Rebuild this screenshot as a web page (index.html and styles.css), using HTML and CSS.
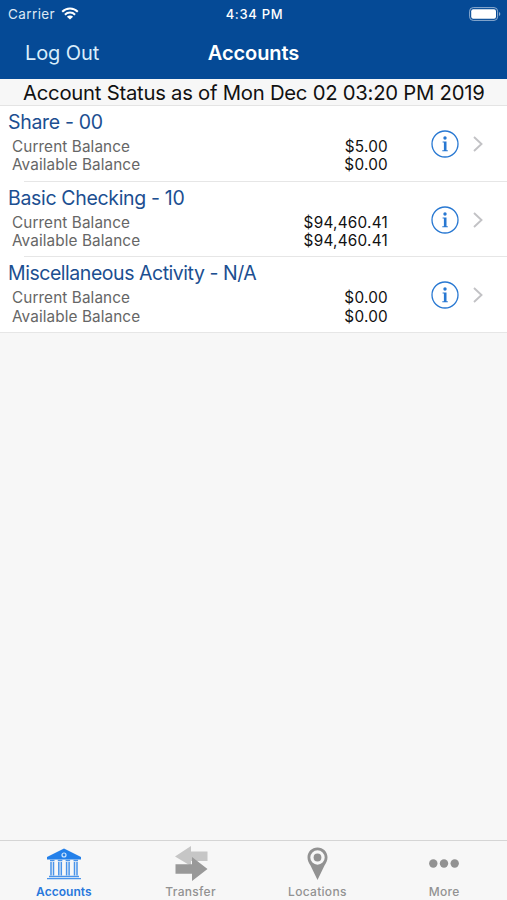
FILE: index.html
```html
<!DOCTYPE html>
<html lang="en">
<head>
<meta charset="utf-8">
<title>Accounts</title>
<link rel="stylesheet" href="styles.css">
</head>
<body>
<svg width="0" height="0" class="defs">
  <symbol id="info" viewBox="0 0 28 28">
    <circle cx="14" cy="14" r="13" fill="none" stroke="currentColor" stroke-width="1.300"/>
    <circle cx="14" cy="8" r="1.700" fill="currentColor"/>
    <path d="M11.600 11.400h3.900v8.900h1.300v1h-5.500v-1h1.600v-7.900h-1.300z" fill="currentColor"/>
  </symbol>
  <symbol id="chevron" viewBox="0 0 10 16">
    <path d="M1 1l7.500 7L1 15" fill="none" stroke="currentColor" stroke-width="1.900"/>
  </symbol>
</svg>
<div class="app">
  <header class="top">
    <div class="status">
      <div class="carrier"><span>Carrier</span>
        <svg class="wifi" viewBox="0 0 18 13"><g fill="none" stroke="#fff" stroke-width="2"><path d="M1.200 4.700a11 11 0 0 1 15.600 0"/><path d="M3.900 7.700a7.200 7.200 0 0 1 10.200 0"/></g><path d="M9 12.600L5.900 9.700a4.400 4.400 0 0 1 6.200 0z" fill="#fff"/></svg>
      </div>
      <span class="time">4:34 PM</span>
      <svg class="battery" viewBox="0 0 32 14"><rect x=".6" y=".6" width="28" height="12.800" rx="3.600" fill="none" stroke="#8fadd0" stroke-width="1"/><rect x="2.200" y="2.200" width="24.800" height="9.600" rx="2" fill="#fff"/><path d="M30 5v4q1.300-.5 1.300-2T30 5z" fill="#8fadd0"/></svg>
    </div>
    <nav class="nav"><span class="logout">Log Out</span><h1>Accounts</h1><span></span></nav>
  </header>
  <div class="asof"><span>Account Status as of Mon Dec 02 03:20 PM 2019</span></div>
  <main class="list">
    <section class="row">
      <div class="details"><h2>Share - 00</h2>
        <div class="line"><span>Current Balance</span><b>$5.00</b></div>
        <div class="line"><span>Available Balance</span><b>$0.00</b></div></div>
      <svg class="info"><use href="#info"/></svg><svg class="chevron"><use href="#chevron"/></svg>
    </section>
    <section class="row">
      <div class="details"><h2>Basic Checking - 10</h2>
        <div class="line"><span>Current Balance</span><b>$94,460.41</b></div>
        <div class="line"><span>Available Balance</span><b>$94,460.41</b></div></div>
      <svg class="info"><use href="#info"/></svg><svg class="chevron"><use href="#chevron"/></svg>
    </section>
    <section class="row">
      <div class="details"><h2 class="long">Miscellaneous Activity - N/A</h2>
        <div class="line"><span>Current Balance</span><b>$0.00</b></div>
        <div class="line"><span>Available Balance</span><b>$0.00</b></div></div>
      <svg class="info"><use href="#info"/></svg><svg class="chevron"><use href="#chevron"/></svg>
    </section>
  </main>
  <footer class="tabs">
    <div class="tab active">
      <svg viewBox="0 0 40 36"><path d="M20 2.500L3 11v2.500h34V11z" fill="#2380ea"/><circle cx="20" cy="9" r="2" fill="none" stroke="#cfe5fc" stroke-width="1.200"/><path d="M6 14.500h4.500M13.800 14.500h4.500M21.600 14.500h4.500M29.500 14.500H34M7 16v13.500M9.500 16v13.500M14.800 16v13.500M17.300 16v13.500M22.600 16v13.500M25.100 16v13.500M30.500 16v13.500M33 16v13.500" stroke="#4a94ea" stroke-width="1.500"/><path d="M5 30.500h30M3 32.700h34" stroke="#4a94ea" stroke-width="1.300"/></svg>
      <span>Accounts</span></div>
    <div class="tab">
      <svg viewBox="0 0 40 36"><path d="M4 10.500L20 0v5.500h16.500V15H20v5z" fill="#c6c6c6"/><path d="M4.500 18.200H21V11l15.500 12L21 35v-7.200H4.500z" fill="#999"/></svg>
      <span>Transfer</span></div>
    <div class="tab">
      <svg viewBox="0 0 40 36"><path fill="#929292" fill-rule="evenodd" d="M20.500 1.500C14.800 1.500 10.500 5.800 10.500 11.200c0 3 1.200 5.300 3 8.300l7 14.500 7-14.500c1.800-3 3-5.300 3-8.300C30.500 5.800 26.200 1.500 20.500 1.500zm0 2.800a7.200 7.200 0 1 1 0 14.400 7.200 7.200 0 0 1 0-14.400z"/><circle cx="20.500" cy="11.500" r="3.900" fill="#929292"/></svg>
      <span>Locations</span></div>
    <div class="tab">
      <svg viewBox="0 0 40 36"><g fill="#929292"><circle cx="9.300" cy="17.500" r="4.200"/><circle cx="20" cy="17.500" r="4.200"/><circle cx="30.700" cy="17.500" r="4.200"/></g></svg>
      <span>More</span></div>
  </footer>
</div>
</body>
</html>
```
FILE: styles.css
```css
* { box-sizing: border-box; }
body { margin: 0; font-family: Inter, "Liberation Sans", sans-serif; }
h1, h2 { margin: 0; font-weight: 400; }
svg { display: block; flex: none; }
.defs { position: absolute; }
.app { display: flex; flex-direction: column; width: 507px; height: 900px; background: #f7f7f7; white-space: nowrap; }
.top { height: 79px; background: #054a96; color: #fff; }
.status { display: grid; grid-template-columns: 1fr auto 1fr; align-items: center; height: 27px; padding: 0 6px 0 8px; font-size: 13.5px; }
.carrier { display: flex; align-items: center; gap: 6px; color: #dce8f4; letter-spacing: .4px; }
.wifi { width: 18px; height: 13px; }
.time { font-weight: 500; font-size: 13px; letter-spacing: .7px; }
.battery { width: 32px; height: 14px; justify-self: end; }
.nav { display: grid; grid-template-columns: 1fr auto 1fr; align-items: center; height: 51px; padding: 0 25px; }
.logout { font-size: 20px; letter-spacing: -.1px; color: #d9edfb; }
h1 { font-size: 20px; font-weight: 600; letter-spacing: -.1px; }
.asof { height: 27px; border-bottom: 1px solid #e4e4e4; line-height: 28px; padding-left: 23px; font-size: 20.3px; letter-spacing: -.25px; color: #111; }
.list { background: #fff; border-bottom: 1px solid #e6e6e6; }
.row { display: flex; height: 75.7px; position: relative; }
.row + .row::before { content: ""; position: absolute; left: 24px; right: 0; top: -1px; height: 1px; background: #e6e6e6; }
.row:last-child { height: 75px; }
.details { width: 388px; padding-top: 4px; }
h2 { padding-left: 8px; font-size: 19.5px; letter-spacing: -.33px; line-height: 24px; height: 27px; color: #1c4f91; }
.long { letter-spacing: -.46px; }
.line { display: flex; justify-content: space-between; height: 18.300px; padding-left: 12px; font-size: 15.3px; letter-spacing: .1px; line-height: 19px; color: #666; }
.line b { font-weight: 400; letter-spacing: .25px; color: #111; }
.info { width: 28px; height: 28px; margin: 24px 14px 0 43px; color: #2878d2; }
.chevron { width: 10px; height: 16px; margin-top: 30px; color: #c2c2c5; }
.tabs { display: grid; grid-template-columns: repeat(4, 1fr); height: 60px; margin-top: auto; border-top: 1px solid #d5d5d5; }
.tab { display: flex; flex-direction: column; align-items: center; padding: 5px 0 0 1px; font-size: 12px; font-weight: 500; color: #929292; letter-spacing: .3px; }
.tab svg { width: 40px; height: 36px; }
.tab span { line-height: 18px; margin-top: 1px; }
.active { color: #2878dc; font-weight: 600; letter-spacing: .05px; }
```
